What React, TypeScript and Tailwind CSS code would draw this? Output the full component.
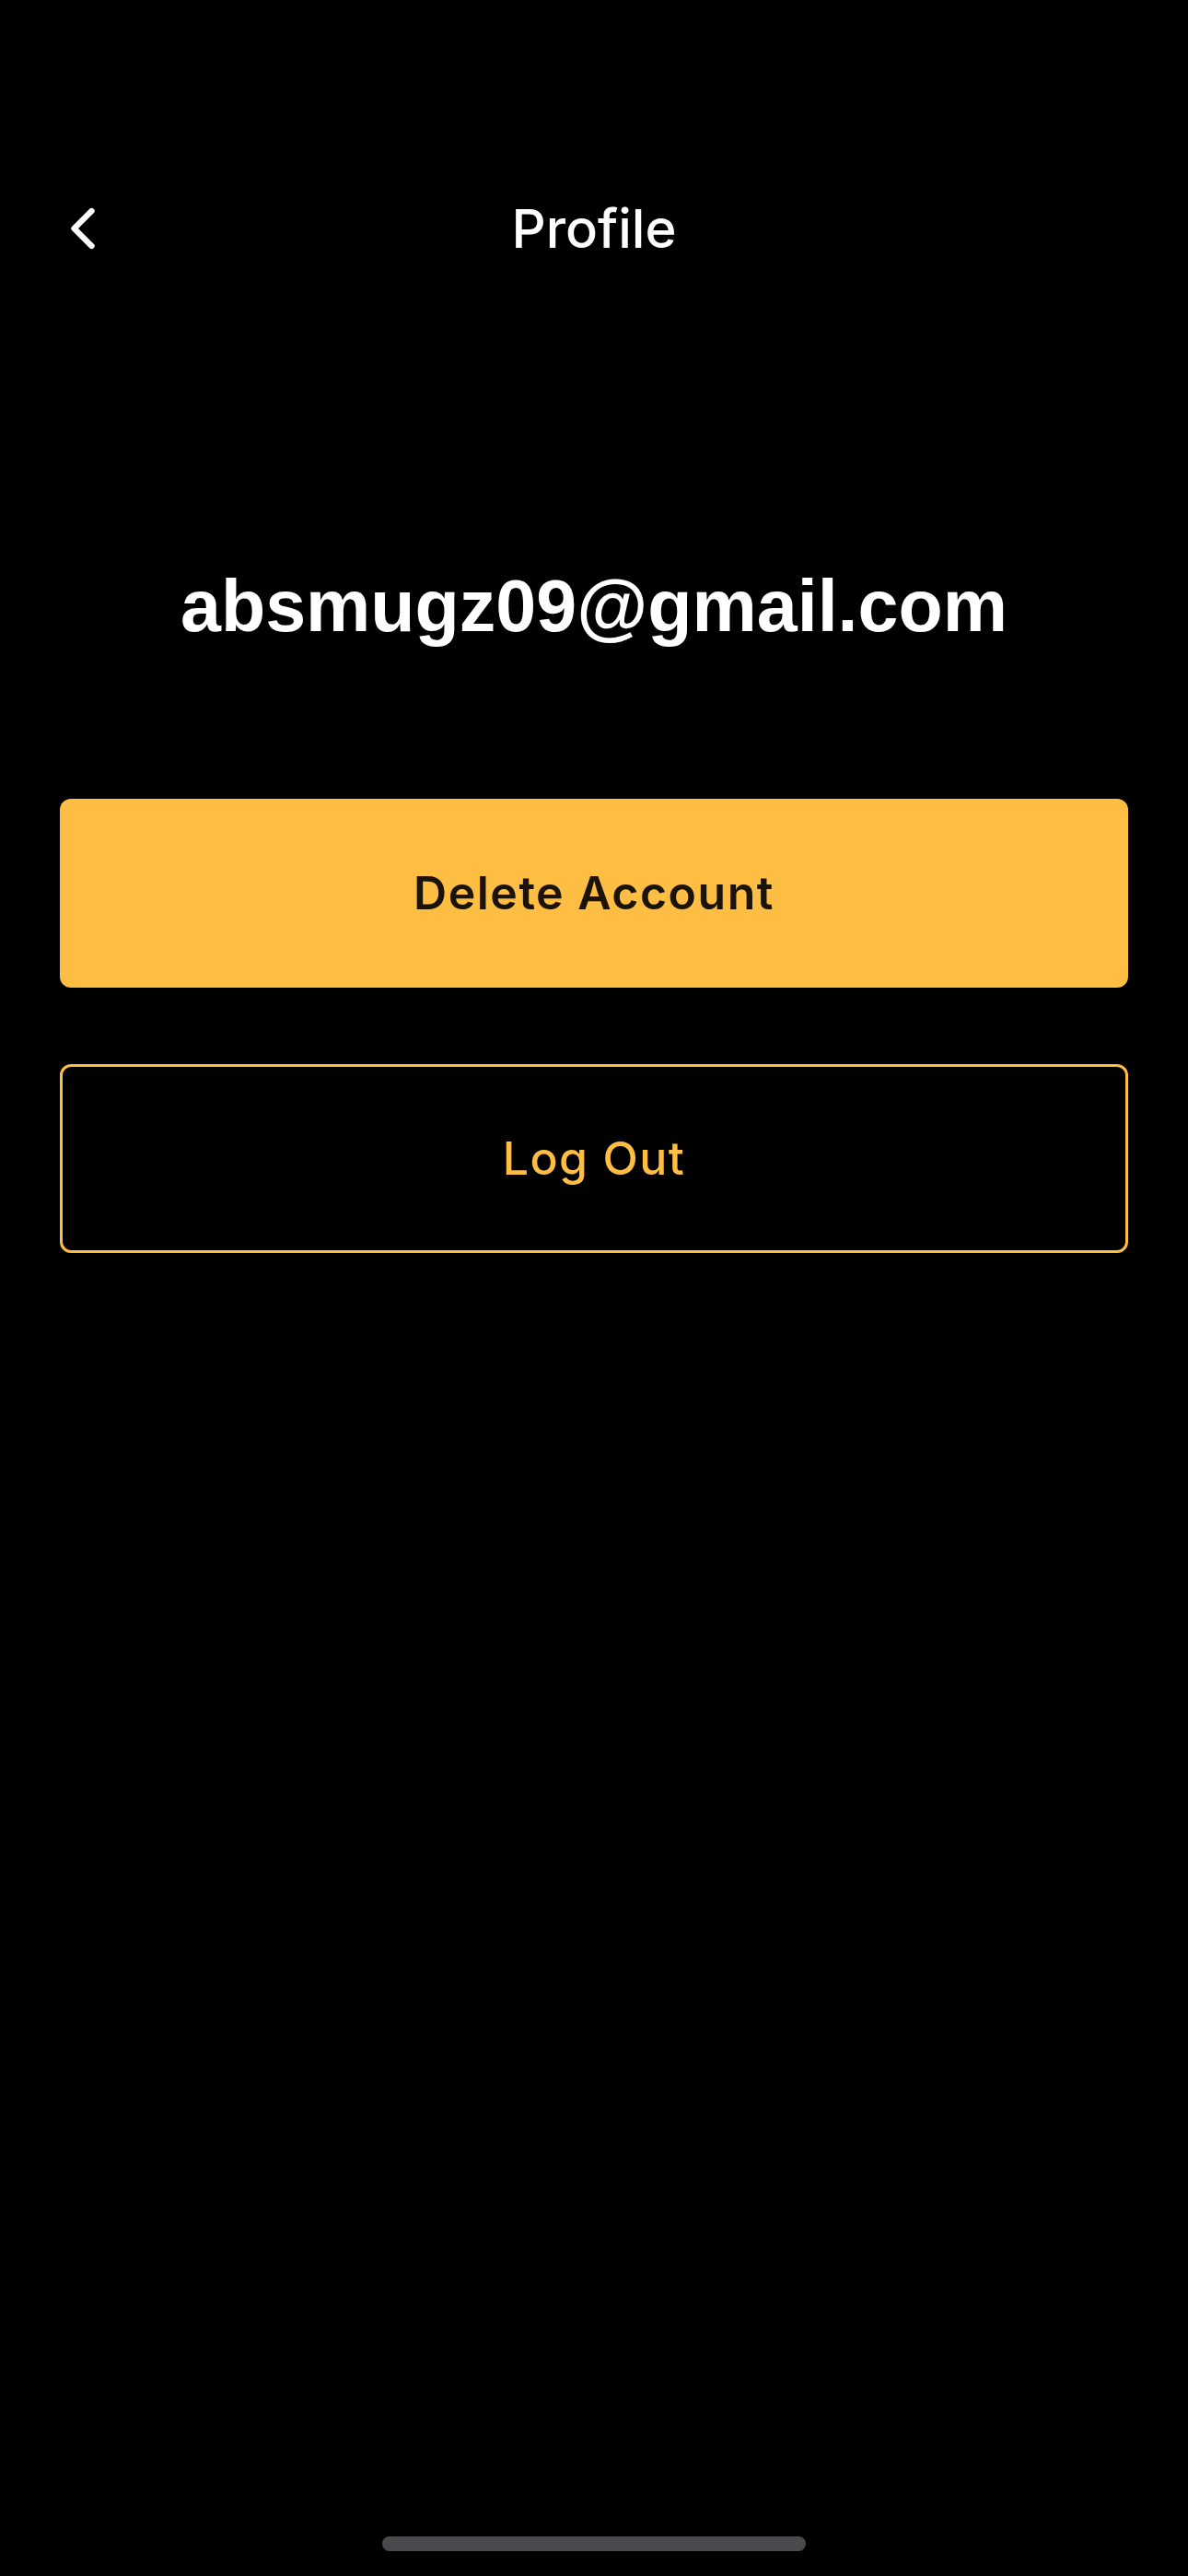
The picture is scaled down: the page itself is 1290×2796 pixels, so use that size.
import { ChevronLeft } from "lucide-react";

export default function App() {
  return (
    <div className="w-[1290px] h-[2796px] bg-black flex flex-col relative overflow-hidden">
      {/* header */}
      <div className="relative mt-[200px] h-[96px] flex items-center justify-center">
        <button className="absolute left-[50px] top-[10px] w-[80px] h-[76px] flex items-center justify-center text-white">
          <ChevronLeft size={76} strokeWidth={2} />
        </button>
        <h1 className="text-white text-[58px] font-medium leading-none font-['Inter',sans-serif]">
          Profile
        </h1>
      </div>

      {/* email */}
      <div className="mt-[322px] flex justify-center">
        <p className="text-white text-[79px] font-bold leading-none font-['Liberation_Sans',Arial,sans-serif]">
          absmugz09@gmail.com
        </p>
      </div>

      {/* actions */}
      <div className="mt-[170px] px-[65px] flex flex-col gap-[83px]">
        <button className="h-[205px] w-full rounded-[12px] bg-[#fdbe43] text-[#1b1208] text-[50px] font-semibold tracking-[1.5px] font-['Inter',sans-serif]">
          Delete Account
        </button>
        <button className="h-[205px] w-full rounded-[12px] border-[3px] border-[#fdbe43] bg-black text-[#fdbe43] text-[50px] font-medium tracking-[1.5px] font-['Inter',sans-serif]">
          Log Out
        </button>
      </div>

      {/* home indicator */}
      <div className="absolute bottom-[27px] left-[415px] w-[460px] h-[16px] rounded-full bg-[#4a494d]" />
    </div>
  );
}
